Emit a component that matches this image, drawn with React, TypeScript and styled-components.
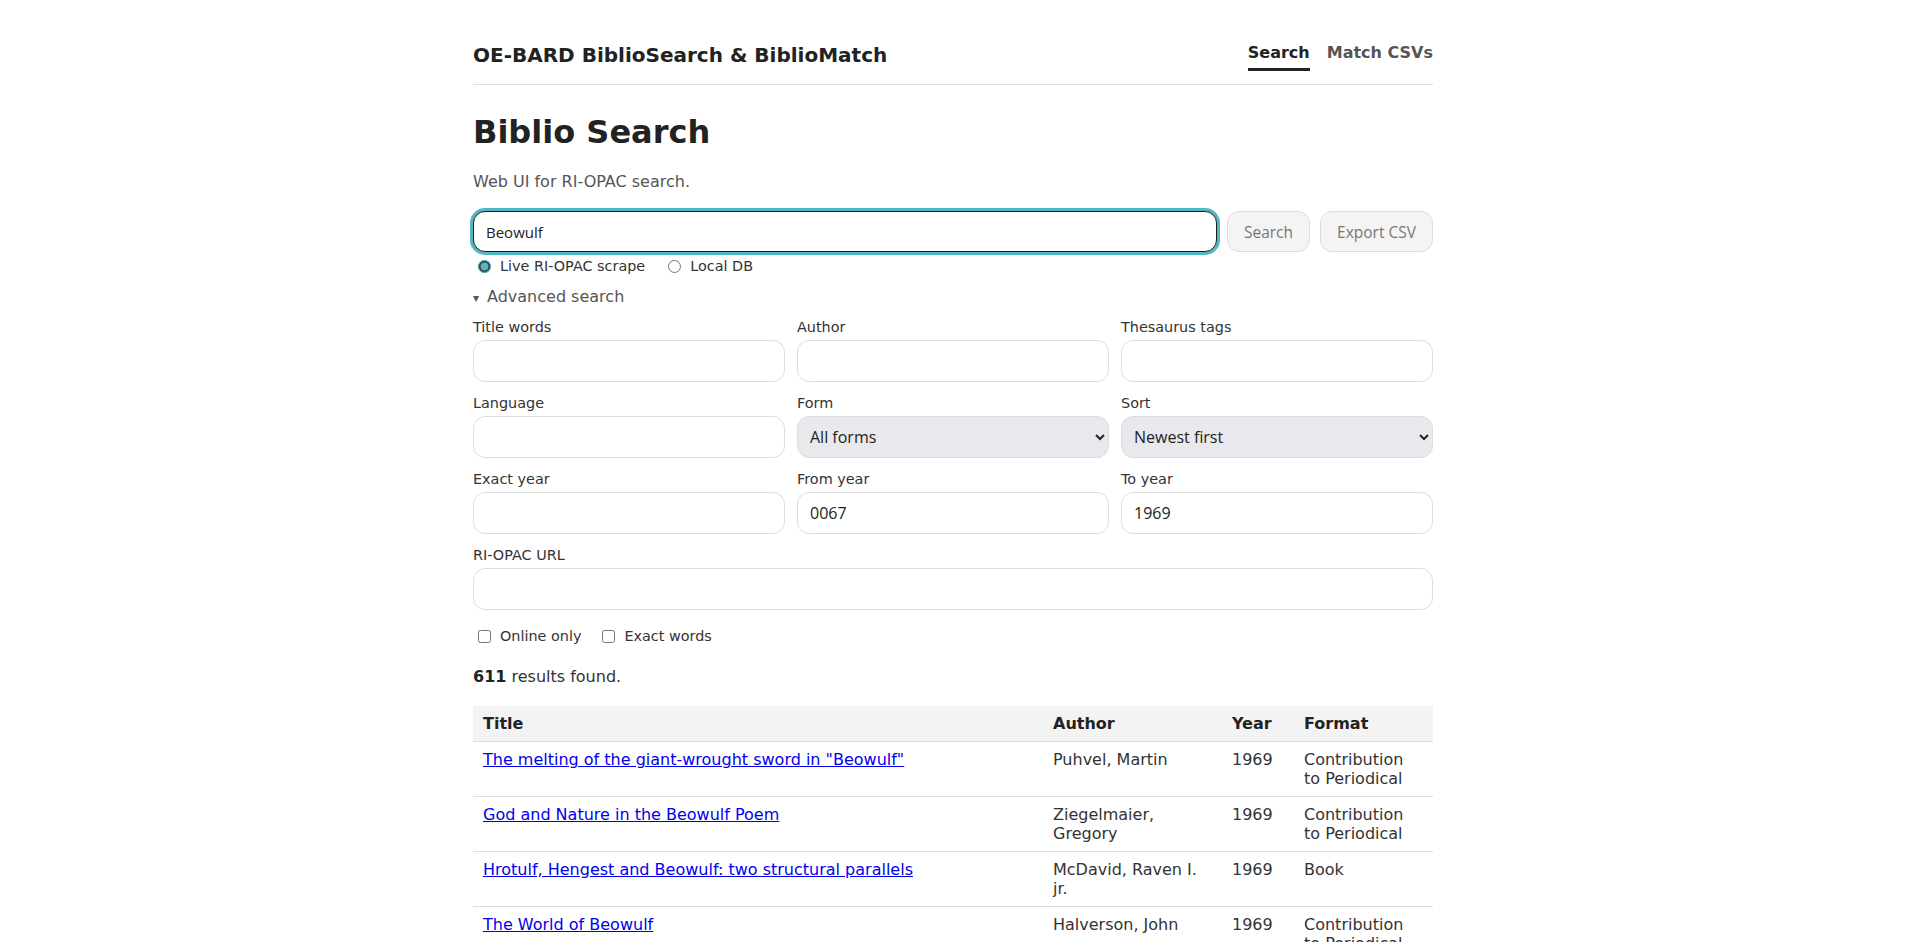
import React from 'react';
import styled, { createGlobalStyle } from 'styled-components';

const GlobalStyle = createGlobalStyle`
  html, body {
    margin: 0;
    padding: 0;
    background: #fff;
  }
  body {
    font-family: "DejaVu Sans", sans-serif;
    font-size: 16px;
    color: #222;
  }
  * {
    box-sizing: border-box;
  }
`;

const Page = styled.div`
  max-width: 960px;
  margin: 0 auto;
`;

const Header = styled.header`
  display: flex;
  justify-content: space-between;
  align-items: flex-start;
  padding: 43px 0 13px;
  border-bottom: 1px solid #ddd;
`;

const Brand = styled.div`
  font-size: 20px;
  font-weight: 700;
  color: #222;
`;

const Nav = styled.nav`
  display: flex;
  gap: 17px;
`;

const NavLink = styled.a<{ $active?: boolean }>`
  font-size: 16px;
  font-weight: 700;
  text-decoration: none;
  color: ${p => (p.$active ? '#222' : '#555')};
  padding-bottom: 6px;
  border-bottom: 3px solid ${p => (p.$active ? '#222' : 'transparent')};
  cursor: pointer;
`;

const Title = styled.h1`
  font-size: 32px;
  font-weight: 700;
  margin: 28px 0 0;
  color: #222;
`;

const Lead = styled.p`
  margin: 21px 0 0;
  color: #555;
`;

const SearchRow = styled.div`
  display: flex;
  gap: 10px;
  margin-top: 20px;
  align-items: center;
`;

const QueryInput = styled.input`
  flex: 1;
  height: 41px;
  padding: 0 12px;
  font-family: "Open Sans", sans-serif;
  font-size: 15px;
  color: #222;
  border: 1px solid #1d1d1d;
  border-radius: 12px;
  box-shadow: 0 0 0 3px #52b7c4;
  outline: none;
`;

const Button = styled.button`
  height: 41px;
  padding: 0 16px;
  font-family: "Open Sans", sans-serif;
  font-size: 15.5px;
  color: #777;
  background: #f4f4f4;
  border: 1px solid #ddd;
  border-radius: 12px;
`;

const ChoiceRow = styled.div<{ $gap: number }>`
  display: flex;
  gap: ${p => p.$gap}px;
  padding-left: 5px;
  font-size: 14.4px;
  color: #333;
`;

const RadioRow = styled(ChoiceRow)`
  margin-top: 6px;
`;

const Choice = styled.label`
  display: inline-flex;
  align-items: center;
  gap: 9px;
  cursor: pointer;

  input {
    margin: 0;
    width: 13px;
    height: 13px;
    accent-color: #52b7c4;
  }
`;

const Advanced = styled.details`
  margin-top: 13px;

  summary {
    list-style: none;
    color: #555;
    cursor: pointer;
  }

  summary::-webkit-details-marker {
    display: none;
  }

  summary::before {
    content: '▾';
    display: inline-block;
    width: 14px;
    font-size: 12px;
    color: #555;
  }
`;

const FieldGrid = styled.div`
  display: grid;
  grid-template-columns: repeat(3, 1fr);
  column-gap: 12px;
  row-gap: 13px;
  margin-top: 13px;
`;

const Field = styled.label<{ $wide?: boolean }>`
  display: flex;
  flex-direction: column;
  gap: 5px;
  font-size: 14.4px;
  color: #333;
  grid-column: ${p => (p.$wide ? '1 / -1' : 'auto')};
`;

const TextInput = styled.input`
  height: 42px;
  padding: 0 12px;
  font-family: "Open Sans", sans-serif;
  font-size: 16px;
  color: #222;
  background: #fff;
  border: 1px solid #ddd;
  border-radius: 12px;
  outline: none;
`;

const Select = styled.select`
  height: 42px;
  padding: 0 8px;
  font-family: "Open Sans", sans-serif;
  font-size: 16px;
  color: #222;
  background: #e9e9ed;
  border: 1px solid #ddd;
  border-radius: 12px;
  outline: none;
`;

const Checks = styled(ChoiceRow)`
  margin-top: 18px;
`;

const ResultCount = styled.p`
  margin: 23px 0 0;
  color: #333;

  strong {
    color: #222;
  }
`;

const Table = styled.table`
  width: 100%;
  margin-top: 20px;
  border-collapse: collapse;
  table-layout: fixed;

  th, td {
    padding: 8px 10px;
    text-align: left;
    vertical-align: top;
    border-bottom: 1px solid #ddd;
  }

  th {
    background: #f3f3f3;
    font-weight: 700;
    color: #222;
  }

  td {
    color: #333;
  }

  a {
    color: #0000ee;
  }
`;

interface Row {
  title: string;
  author: string;
  year: string;
  format: string;
}

const rows: Row[] = [
  { title: 'The melting of the giant-wrought sword in "Beowulf"', author: 'Puhvel, Martin', year: '1969', format: 'Contribution to Periodical' },
  { title: 'God and Nature in the Beowulf Poem', author: 'Ziegelmaier, Gregory', year: '1969', format: 'Contribution to Periodical' },
  { title: 'Hrotulf, Hengest and Beowulf: two structural parallels', author: 'McDavid, Raven I. jr.', year: '1969', format: 'Book' },
  { title: 'The World of Beowulf', author: 'Halverson, John', year: '1969', format: 'Contribution to Periodical' },
];

const App: React.FC = () => {
  return (
    <Page>
      <GlobalStyle />
      <Header>
        <Brand>OE-BARD BiblioSearch &amp; BiblioMatch</Brand>
        <Nav>
          <NavLink $active>Search</NavLink>
          <NavLink>Match CSVs</NavLink>
        </Nav>
      </Header>

      <Title>Biblio Search</Title>
      <Lead>Web UI for RI-OPAC search.</Lead>

      <SearchRow>
        <QueryInput defaultValue="Beowulf" />
        <Button>Search</Button>
        <Button>Export CSV</Button>
      </SearchRow>

      <RadioRow $gap={23}>
        <Choice>
          <input type="radio" name="source" defaultChecked />
          Live RI-OPAC scrape
        </Choice>
        <Choice>
          <input type="radio" name="source" />
          Local DB
        </Choice>
      </RadioRow>

      <Advanced open>
        <summary>Advanced search</summary>
        <FieldGrid>
          <Field>
            Title words
            <TextInput />
          </Field>
          <Field>
            Author
            <TextInput />
          </Field>
          <Field>
            Thesaurus tags
            <TextInput />
          </Field>
          <Field>
            Language
            <TextInput />
          </Field>
          <Field>
            Form
            <Select defaultValue="all">
              <option value="all">All forms</option>
              <option value="book">Book</option>
              <option value="periodical">Contribution to Periodical</option>
            </Select>
          </Field>
          <Field>
            Sort
            <Select defaultValue="newest">
              <option value="newest">Newest first</option>
              <option value="oldest">Oldest first</option>
            </Select>
          </Field>
          <Field>
            Exact year
            <TextInput />
          </Field>
          <Field>
            From year
            <TextInput defaultValue="0067" />
          </Field>
          <Field>
            To year
            <TextInput defaultValue="1969" />
          </Field>
          <Field $wide>
            RI-OPAC URL
            <TextInput />
          </Field>
        </FieldGrid>
      </Advanced>

      <Checks $gap={21}>
        <Choice>
          <input type="checkbox" />
          Online only
        </Choice>
        <Choice>
          <input type="checkbox" />
          Exact words
        </Choice>
      </Checks>

      <ResultCount>
        <strong>611</strong> results found.
      </ResultCount>

      <Table>
        <colgroup>
          <col />
          <col style={{ width: 179 }} />
          <col style={{ width: 72 }} />
          <col style={{ width: 139 }} />
        </colgroup>
        <thead>
          <tr>
            <th>Title</th>
            <th>Author</th>
            <th>Year</th>
            <th>Format</th>
          </tr>
        </thead>
        <tbody>
          {rows.map((r, i) => (
            <tr key={i}>
              <td>
                <a href="#">{r.title}</a>
              </td>
              <td>{r.author}</td>
              <td>{r.year}</td>
              <td>{r.format}</td>
            </tr>
          ))}
        </tbody>
      </Table>
    </Page>
  );
};

export default App;
